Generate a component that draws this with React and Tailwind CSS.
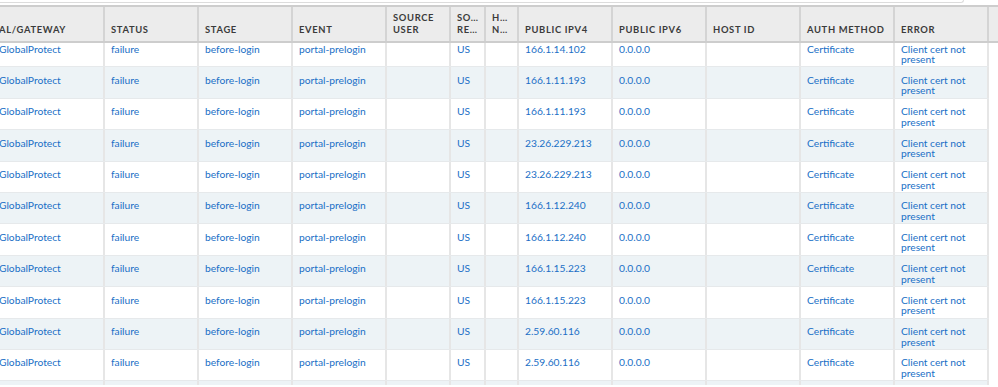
const columns = [
  { id: "gw", width: "w-[112px]", label: ["AL/GATEWAY"] },
  { id: "status", width: "w-[94px]", label: ["STATUS"] },
  { id: "stage", width: "w-[94px]", label: ["STAGE"] },
  { id: "event", width: "w-[94px]", label: ["EVENT"] },
  { id: "user", width: "w-[64px]", label: ["SOURCE", "USER"] },
  { id: "region", width: "w-[35px]", label: ["SO…", "RE…"] },
  { id: "host", width: "w-[33px]", label: ["H…", "N…"] },
  { id: "ipv4", width: "w-[94px]", label: ["PUBLIC IPV4"] },
  { id: "ipv6", width: "w-[94px]", label: ["PUBLIC IPV6"] },
  { id: "hostId", width: "w-[94px]", label: ["HOST ID"] },
  { id: "auth", width: "w-[94px]", label: ["AUTH METHOD"] },
  { id: "error", width: "w-[94px]", label: ["ERROR"] },
];

const ips = [
  "166.1.14.102",
  "166.1.11.193",
  "166.1.11.193",
  "23.26.229.213",
  "23.26.229.213",
  "166.1.12.240",
  "166.1.12.240",
  "166.1.15.223",
  "166.1.15.223",
  "2.59.60.116",
  "2.59.60.116",
];

const rows = ips.map((ip) => ({
  gw: "GlobalProtect",
  status: "failure",
  stage: "before-login",
  event: "portal-prelogin",
  user: "",
  region: "US",
  host: "",
  ipv4: ip,
  ipv6: "0.0.0.0",
  hostId: "",
  auth: "Certificate",
  error: "Client cert not present",
}));

// the next row only peeks in at the bottom edge, its text is out of view
rows.push({});

export default function App() {
  return (
    <div className="w-[998px] h-[387px] overflow-hidden bg-white font-['Lato',sans-serif]">
      {/* top panel edge */}
      <div className="h-[5px]">
        <div className="w-[964px] h-[3px] border-b border-r border-[#dcdcdc] rounded-br-[4px]" />
      </div>

      {/* header */}
      <div className="flex -ml-[7px] h-[38px] bg-[#ececec] border-t-2 border-b-2 border-[#cdcdcd]">
        {columns.map((col) => (
          <div
            key={col.id}
            className={`${col.width} shrink-0 flex flex-col justify-end pl-[6px] pb-[5px] border-r-2 border-[#d4d4d4] overflow-hidden`}
          >
            {col.label.map((line) => (
              <span
                key={line}
                className="text-[9.4px] leading-[12px] font-bold tracking-[0.07em] text-[#3b3b3b] whitespace-nowrap"
              >
                {line}
              </span>
            ))}
          </div>
        ))}
        <div className="flex-1" />
      </div>

      {/* body, scrolled a few pixels under the header */}
      <div className="h-[342px] overflow-hidden">
        <div className="-mt-[7px]">
          {rows.map((row, i) => (
            <div key={i} className="flex -ml-[7px] h-[31.4px]">
              <div
                className={`flex border-b border-[#e6e9eb] ${
                  i % 2 === 1 ? "bg-[#edf3f6]" : "bg-white"
                }`}
              >
                {columns.map((col) => (
                  <div
                    key={col.id}
                    className={`${col.width} shrink-0 pl-[6px] pr-[4px] pt-[7.5px] border-r-2 border-[#e6e6e6] text-[10.25px] leading-[10.5px] text-[#1a6fc6] overflow-hidden`}
                  >
                    {row[col.id]}
                  </div>
                ))}
              </div>
              <div className="flex-1 bg-white" />
            </div>
          ))}
        </div>
      </div>
    </div>
  );
}
